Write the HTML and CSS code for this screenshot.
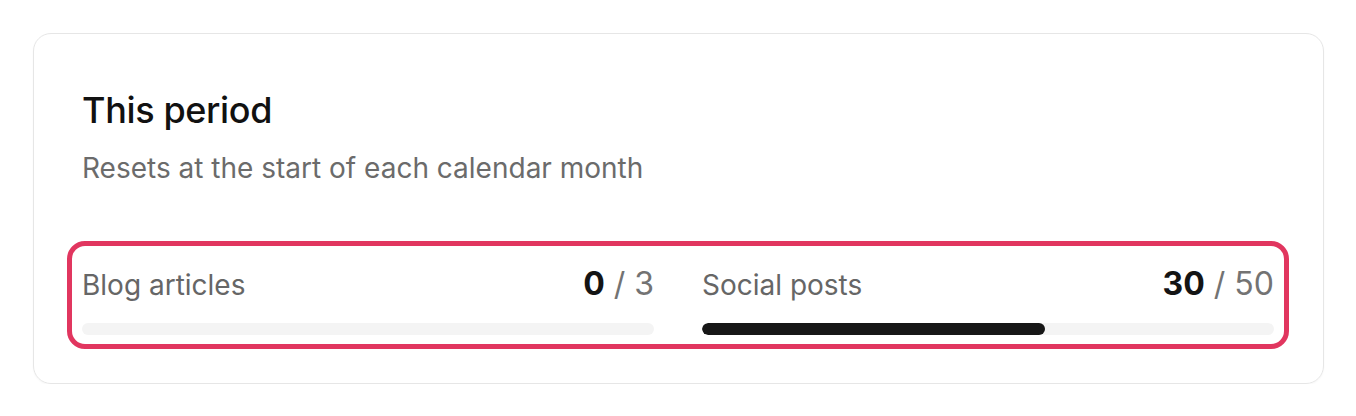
FILE: index.html
```html
<!DOCTYPE html>
<html lang="en">
<head>
  <meta charset="UTF-8">
  <meta name="viewport" content="width=device-width, initial-scale=1.0">
  <title>Usage</title>
  <link rel="stylesheet" href="styles.css">
</head>
<body>
  <div class="card">
    <h2 class="title">This period</h2>
    <p class="subtitle">Resets at the start of each calendar month</p>

    <div class="highlight">
      <div class="usage">
        <div class="meter">
          <div class="meter-head">
            <span class="label">Blog articles</span>
            <span class="count"><b>0</b> / 3</span>
          </div>
          <div class="track"><div class="fill" style="width:0%"></div></div>
        </div>
        <div class="meter">
          <div class="meter-head">
            <span class="label">Social posts</span>
            <span class="count"><b>30</b> / 50</span>
          </div>
          <div class="track"><div class="fill" style="width:60%"></div></div>
        </div>
      </div>
    </div>
  </div>
</body>
</html>
```

FILE: styles.css
```css
*{
  margin:0;
  padding:0;
  box-sizing:border-box;
}
body{
  font-family:Inter, "Noto Sans", sans-serif;
  background:#fff;
  padding:33px 32px 0 33px;
}
.card{
  border:1px solid #e6e6e6;
  border-radius:18px;
  padding:55px 49px 34px 48px;
  box-shadow:0 1px 2px rgba(0,0,0,0.03);
}
.title{
  font-size:36px;
  font-weight:500;
  color:#111;
  letter-spacing:-0.01em;
  line-height:1.2;
}
.subtitle{
  font-size:28px;
  color:#6b6b6b;
  margin-top:17px;
  line-height:1.4;
}
.highlight{
  margin:53px -15px 0;
  border:5px solid #e1365f;
  border-radius:18px;
  padding:18px 10px 9px;
}
.usage{
  display:grid;
  grid-template-columns:1fr 1fr;
  gap:48px;
}
.meter-head{
  display:flex;
  justify-content:space-between;
  align-items:baseline;
  line-height:40px;
}
.label{
  font-size:28px;
  color:#666;
}
.count{
  font-size:32px;
  color:#737373;
}
.count b{
  font-weight:700;
  color:#141414;
}
.track{
  margin-top:18px;
  height:12px;
  border-radius:6px;
  background:#f4f4f4;
  overflow:hidden;
}
.fill{
  height:100%;
  border-radius:6px;
  background:#171717;
}
```
